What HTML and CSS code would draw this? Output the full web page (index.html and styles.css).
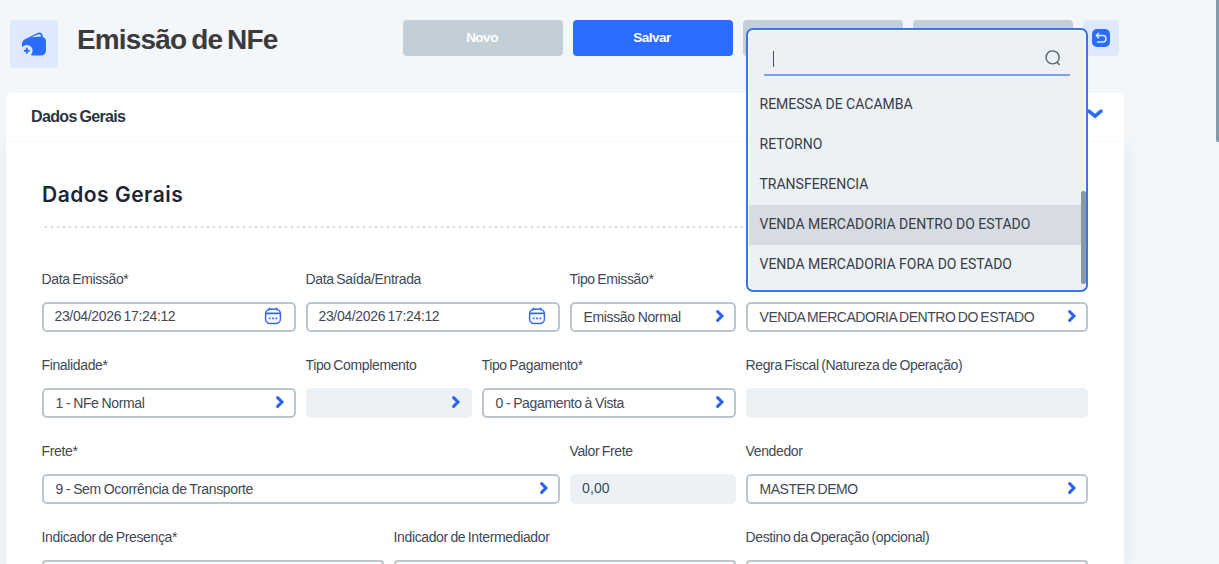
FILE: index.html
```html
<!DOCTYPE html>
<html lang="pt-BR">
<head>
<meta charset="utf-8">
<title>Emissão de NFe</title>
<link rel="stylesheet" href="styles.css">
</head>
<body>
<svg class="defs" width="0" height="0">
  <symbol id="chevron" viewBox="0 0 10 14"><path d="M2.600 2.600 7 7 2.600 11.400" fill="none" stroke="currentColor" stroke-width="3" stroke-linecap="round" stroke-linejoin="miter"/></symbol>
  <symbol id="calendar" viewBox="0 0 18 18"><rect x="1.600" y="2.200" width="14.800" height="14.400" rx="4.500" fill="none" stroke="currentColor" stroke-width="1.500"/><path d="M2 6.400h14M5.300 1.200v1.600M12.700 1.200v1.600" fill="none" stroke="currentColor" stroke-width="1.600" stroke-linecap="round"/><path d="M4.800 11.300h1.800M8.100 11.300h1.800M11.400 11.300h1.800" stroke="currentColor" stroke-width="1.700"/></symbol>
</svg>
<header class="topbar">
  <div class="page-icon">
    <svg width="26" height="26" viewBox="0 0 26 26">
      <path d="M1 14.500C1 10.500 2 9 4.500 7.900L16 2.200c3.200-1.500 5.400-.3 6 3.900 2.100.7 3 2.200 3 4.900v7.500c0 4.300-1.800 6-6 6H11L1 18z" fill="#2a6dfb"/>
      <path d="M10.500 6.200 16.800 3.600c1.900-.7 3-.1 3.500 2z" fill="#dfe9fd"/>
      <circle cx="5.800" cy="19.700" r="5.800" fill="#dfe9fd"/>
      <path d="M5.800 17.600v4.200M3.700 19.700h4.200" stroke="#2a6dfb" stroke-width="2" stroke-linecap="round"/>
    </svg>
  </div>
  <h1 class="title">Emissão de NFe</h1>
  <nav class="actions">
    <button class="btn">Novo</button>
    <button class="btn primary">Salvar</button>
    <button class="btn"></button>
    <button class="btn"></button>
    <button class="back"><svg width="18" height="18" viewBox="0 0 18 18"><rect width="18" height="18" rx="5" fill="#2a6dfb"/><path d="M6.500 4.300 4.300 6.500l2.200 2.200M4.700 6.500h6a3.200 3.200 0 0 1 0 6.500H5.500" fill="none" stroke="#dfe9fd" stroke-width="1.500" stroke-linecap="round" stroke-linejoin="round"/></svg></button>
  </nav>
</header>
<main class="card">
  <div class="card-head"><span>Dados Gerais</span><svg width="18" height="12" viewBox="0 0 18 12"><path d="M3 3.200 9 8.200 15 3.200" fill="none" stroke="#2a6dfb" stroke-width="3.600" stroke-linecap="round"/></svg></div>
  <section class="card-body">
    <h2 class="section-title">Dados Gerais</h2>
    <div class="divider"></div>
    <form class="grid">
      <div class="field w3"><label>Data Emissão*</label><div class="input date"><span>23/04/2026 17:24:12</span><svg class="cal"><use href="#calendar"/></svg></div></div>
      <div class="field w3"><label>Data Saída/Entrada</label><div class="input date"><span>23/04/2026 17:24:12</span><svg class="cal"><use href="#calendar"/></svg></div></div>
      <div class="field w2"><label>Tipo Emissão*</label><div class="input"><span>Emissão Normal</span><svg class="chev"><use href="#chevron"/></svg></div></div>
      <div class="field w4 operation"><label></label><div class="input"><span class="caps">VENDA MERCADORIA DENTRO DO ESTADO</span><svg class="chev"><use href="#chevron"/></svg></div>
        <div class="dropdown">
          <div class="search"><i class="caret"></i><svg width="18" height="18" viewBox="0 0 18 18"><circle cx="8.600" cy="8.400" r="6.500" fill="none" stroke="#5a6470" stroke-width="1.400"/><path d="M13 13l2.500 3" stroke="#5a6470" stroke-width="1.500"/></svg></div>
          <ul class="options">
            <li>REMESSA DE CACAMBA</li>
            <li>RETORNO</li>
            <li>TRANSFERENCIA</li>
            <li class="selected">VENDA MERCADORIA DENTRO DO ESTADO</li>
            <li>VENDA MERCADORIA FORA DO ESTADO</li>
          </ul>
          <div class="thumb"></div>
        </div>
      </div>
      <div class="field w3"><label>Finalidade*</label><div class="input"><span>1 - NFe Normal</span><svg class="chev"><use href="#chevron"/></svg></div></div>
      <div class="field w2"><label>Tipo Complemento</label><div class="input disabled"><span></span><svg class="chev"><use href="#chevron"/></svg></div></div>
      <div class="field w3"><label>Tipo Pagamento*</label><div class="input"><span>0 - Pagamento à Vista</span><svg class="chev"><use href="#chevron"/></svg></div></div>
      <div class="field w4"><label>Regra Fiscal (Natureza de Operação)</label><div class="input disabled"></div></div>
      <div class="field w6"><label>Frete*</label><div class="input"><span>9 - Sem Ocorrência de Transporte</span><svg class="chev"><use href="#chevron"/></svg></div></div>
      <div class="field w2"><label>Valor Frete</label><div class="input disabled amount"><span>0,00</span></div></div>
      <div class="field w4"><label>Vendedor</label><div class="input"><span class="caps">MASTER DEMO</span><svg class="chev"><use href="#chevron"/></svg></div></div>
      <div class="field w4 cut"><label>Indicador de Presença*</label><div class="input"></div></div>
      <div class="field w4 cut"><label>Indicador de Intermediador</label><div class="input"></div></div>
      <div class="field w4 cut"><label>Destino da Operação (opcional)</label><div class="input"></div></div>
    </form>
  </section>
</main>
<div class="page-scroll"></div>
</body>
</html>
```
FILE: styles.css
```css
* { box-sizing: border-box; }
html, body { height: 100%; }
body { margin: 0; overflow: hidden; background: #f3f7fa; font-family: "Liberation Sans", Arial, sans-serif; color: #414956; }
.defs { position: absolute; }
.topbar { display: flex; height: 93px; padding: 20px 100px 0 10px; }
.page-icon { display: flex; align-items: center; justify-content: center; width: 48px; height: 48px; border-radius: 4px; background: #dfe9fd; }
.title { margin: 0 0 0 19px; font-size: 28px; line-height: 40px; letter-spacing: -0.85px; word-spacing: -2px; color: #3b3b3b; white-space: nowrap; }
.actions { display: flex; gap: 10px; margin-left: auto; }
.btn { width: 160px; height: 36px; padding: 0 2px 2px 0; border: 0; border-radius: 4px; background: #c3cfd6; color: #fff; font: bold 13.5px "Liberation Sans", Arial, sans-serif; letter-spacing: -0.5px; }
.btn.primary { background: #2a6dff; }
.back { display: flex; align-items: center; justify-content: center; width: 36px; height: 36px; padding: 0; border: 0; border-radius: 4px; background: #dfe9fd; }
.card { width: 1118px; margin-left: 6px; }
.card-head { position: relative; display: flex; align-items: center; justify-content: space-between; height: 49px; padding: 0 21px 1px 25px; border-bottom: 1px solid #f8f9fa; background: #fff; border-radius: 5px 5px 0 0; font-size: 16px; font-weight: bold; letter-spacing: -0.65px; word-spacing: -1px; color: #2c3342; z-index: 1; }
.card-head svg { margin-bottom: 5px; margin-right: -1px; }
.card-body { height: 422px; padding: 36px 36px 0; background: #fff; box-shadow: 0 4px 18px rgba(90, 115, 135, .13); }
.section-title { margin: 0; font: 600 21px/34px Inter, sans-serif; letter-spacing: 0.5px; color: #1e2535; }
.divider { height: 2px; margin: 14px 0 42px 3px; background: radial-gradient(circle at 1px 1px, #d3d8dc 1px, transparent 1.300px) 0 0 / 6px 2px repeat-x; }
.grid { display: grid; grid-template-columns: repeat(12, 78px); column-gap: 10px; row-gap: 24px; }
.field { display: grid; grid-template-rows: 32px 30px; white-space: nowrap; }
.w2 { grid-column: span 2; }
.w3 { grid-column: span 3; }
.w4 { grid-column: span 4; }
.w6 { grid-column: span 6; }
label { margin-left: -0.5px; font-size: 14px; line-height: 18px; letter-spacing: -0.36px; word-spacing: -1px; }
.input { display: flex; align-items: center; justify-content: space-between; padding: 0 9.5px 0 11.5px; border: 2px solid #bcc6ce; border-radius: 5px; background: #fff; font-size: 14px; letter-spacing: -0.35px; word-spacing: -0.6px; }
.input.date { padding: 0 12px 2px 10.5px; letter-spacing: -0.35px; word-spacing: -1px; }
.input.disabled { border-color: #ecf1f5; background: #ecf1f5; }
.input.amount { padding-bottom: 2px; padding-left: 10px; letter-spacing: 0.1px; }
.caps { letter-spacing: -0.46px; word-spacing: -1px; }
.chev { width: 10px; height: 14px; margin-bottom: 2px; color: #2a62f5; }
.cal { width: 18px; height: 18px; color: #3569f3; }
.cut { grid-template-rows: 32px 4px; }
.cut .input { border-bottom: 0; border-radius: 5px 5px 0 0; }
.operation { position: relative; z-index: 2; }
.dropdown { position: absolute; left: 0; bottom: 40px; width: 342px; height: 264px; border: 2px solid #3b73ea; border-radius: 7px; background: #ecf1f5; box-shadow: inset 0 0 0 1px #f8fbfd; z-index: 2; }
.search { display: flex; align-items: center; justify-content: space-between; height: 32px; margin: 14px 16px 0; padding: 0 8px 2px 9px; border-bottom: 2px solid #7da0f0; }
.caret { width: 1px; height: 16px; margin-top: 2px; background: #4b5159; }
.options { margin: 9px 5px 0 1px; padding: 0; list-style: none; font: 14px/38px Roboto, sans-serif; letter-spacing: 0; word-spacing: 0; color: #363d48; }
.options li { height: 40px; padding-left: 10.5px; }
.options .selected { background: #d7dce3; }
.thumb { position: absolute; right: 0; top: 161px; width: 5px; height: 93px; border-radius: 2px; background: #8799a7; }
.page-scroll { position: absolute; right: 0; top: 0; width: 3px; height: 142px; background: #8799a7; border-bottom-left-radius: 2px; }
```
